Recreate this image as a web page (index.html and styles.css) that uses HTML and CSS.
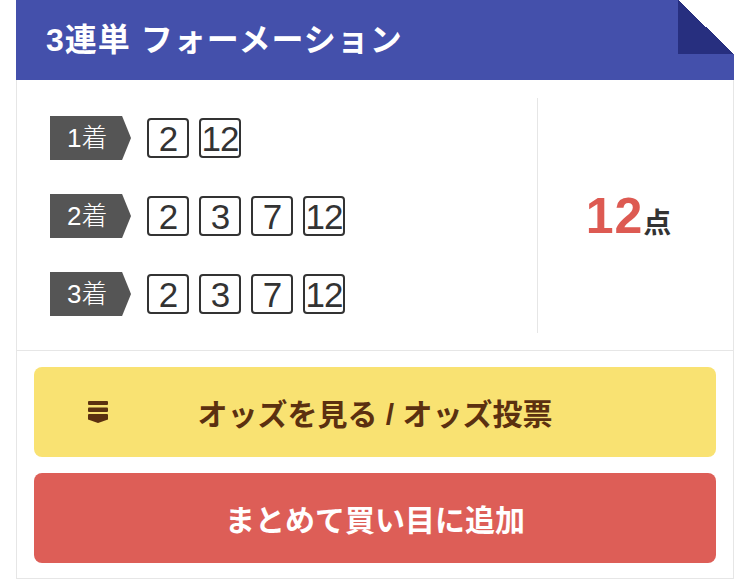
FILE: index.html
```html
<!DOCTYPE html>
<html lang="ja">
<head>
    <meta charset="UTF-8">
    <meta name="viewport" content="width=device-width, initial-scale=1.0">
    <title>3連単 フォーメーション</title>
    <link rel="stylesheet" href="styles.css">
</head>
<body>
    <div class="panel">
        <h2 class="panel-title">3連単 フォーメーション</h2>
        <div class="card">
            <div class="card-top">
                <div class="selections">
                    <div class="pick-row">
                        <span class="place-tag">1着</span>
                        <div class="nums">
                            <span class="num">2</span>
                            <span class="num">12</span>
                        </div>
                    </div>
                    <div class="pick-row">
                        <span class="place-tag">2着</span>
                        <div class="nums">
                            <span class="num">2</span>
                            <span class="num">3</span>
                            <span class="num">7</span>
                            <span class="num">12</span>
                        </div>
                    </div>
                    <div class="pick-row">
                        <span class="place-tag">3着</span>
                        <div class="nums">
                            <span class="num">2</span>
                            <span class="num">3</span>
                            <span class="num">7</span>
                            <span class="num">12</span>
                        </div>
                    </div>
                </div>
                <div class="points">
                    <span class="points-num">12</span><span class="points-unit">点</span>
                </div>
            </div>
            <div class="actions">
                <button class="btn btn-odds">
                    <svg class="btn-icon" width="20" height="22" viewBox="0 0 20 22">
                        <rect x="0" y="0" width="20" height="4" rx="1" fill="#5b3010"/>
                        <rect x="0" y="6.5" width="20" height="4.5" rx="1" fill="#5b3010"/>
                        <path d="M1 13h18a1 1 0 0 1 1 1v4.5L10 22 0 18.5V14a1 1 0 0 1 1-1z" fill="#5b3010"/>
                    </svg>
                    <span class="btn-label">オッズを見る / オッズ投票</span>
                </button>
                <button class="btn btn-add">まとめて買い目に追加</button>
            </div>
        </div>
    </div>
</body>
</html>
```

FILE: styles.css
```css
body {
    margin: 0;
    background-color: #fff;
    font-family: "Liberation Sans", "Noto Sans CJK JP", sans-serif;
    color: #333;
}
.panel {
    width: 718px;
    margin: 0 16px;
}
.panel-title {
    position: relative;
    margin: 0;
    height: 80px;
    padding-left: 30px;
    background-color: #4450ab;
    color: #fff;
    font-size: 32px;
    font-weight: bold;
    line-height: 80px;
    letter-spacing: 1px;
}
/* folded corner */
.panel-title::after {
    content: "";
    position: absolute;
    top: 0;
    right: 0;
    width: 56px;
    height: 54px;
    background: linear-gradient(to top right, #272f7f 50%, #fff 50%);
}
.card {
    border: 1px solid #e6e6e6;
    border-top: none;
}
.card-top {
    display: flex;
    padding: 18px 0 17px;
    border-bottom: 1px solid #e6e6e6;
}
.selections {
    width: 487px;
    padding: 18px 0 17px 33px;
    border-right: 1px solid #e6e6e6;
    display: flex;
    flex-direction: column;
    gap: 34px;
}
.pick-row {
    display: flex;
    align-items: center;
    gap: 16px;
}
.place-tag {
    width: 64px;
    height: 44px;
    padding-left: 17px;
    background-color: #555;
    color: #fff;
    font-size: 26px;
    font-weight: 300;
    line-height: 44px;
    clip-path: polygon(0 0, 89% 0, 100% 50%, 89% 100%, 0 100%);
}
.nums {
    display: flex;
    gap: 10px;
}
.num {
    box-sizing: border-box;
    width: 42px;
    height: 40px;
    border: 2px solid #333;
    border-radius: 4px;
    font-size: 35px;
    line-height: 37px;
    text-align: center;
    letter-spacing: -1px;
}
.points {
    flex: 1;
    display: flex;
    justify-content: center;
    align-items: baseline;
    align-self: center;
    padding-right: 14px;
}
.points-num {
    color: #dd5a52;
    font-size: 50px;
    font-weight: bold;
    letter-spacing: 1px;
}
.points-unit {
    font-size: 28px;
    font-weight: bold;
}
.actions {
    display: flex;
    flex-direction: column;
    gap: 16px;
    padding: 16px 17px 15px;
}
.btn {
    height: 90px;
    border: none;
    border-radius: 8px;
    font-family: inherit;
    font-weight: bold;
    cursor: pointer;
}
.btn-odds {
    display: grid;
    grid-template-columns: 1fr auto 1fr;
    align-items: center;
    background-color: #f9e272;
    color: #5b3010;
    font-size: 30px;
}
.btn-icon {
    margin-left: 48px;
}
.btn-add {
    background-color: #dd5e57;
    color: #fff;
    font-size: 30px;
}
```
